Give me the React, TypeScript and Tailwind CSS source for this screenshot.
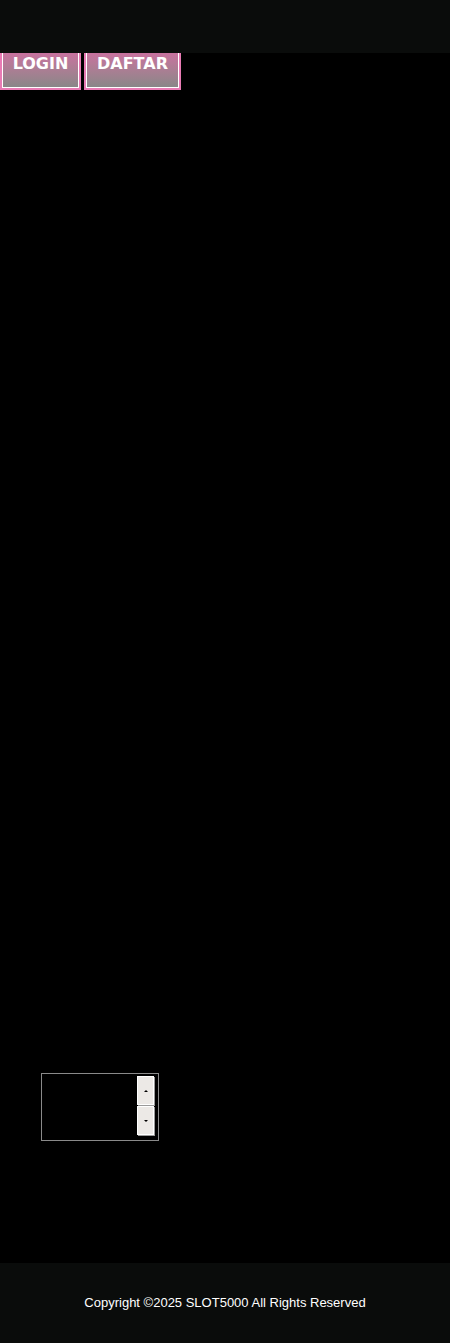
import React from 'react';

export default function App() {
  return (
    <div className="min-h-[1343px] bg-black flex flex-col font-['DejaVu_Sans',sans-serif]">
      {/* top bar */}
      <div className="h-[53px] bg-[#0a0c0b]" />

      {/* auth buttons */}
      <div className="flex gap-[3px] h-[37px]">
        <button className="w-[81px] h-full border-x-2 border-b-2 border-[#e87bb4] shadow-[inset_-1px_-1px_0_#ffffff,inset_1px_0_0_#ffffff] bg-gradient-to-b from-[#c8729f] to-[#878787] text-white font-bold text-[16px] leading-none pb-[14px]">
          LOGIN
        </button>
        <button className="w-[97px] h-full border-x-2 border-b-2 border-[#e87bb4] shadow-[inset_-1px_-1px_0_#ffffff,inset_1px_0_0_#ffffff] bg-gradient-to-b from-[#c8729f] to-[#878787] text-white font-bold text-[16px] leading-none pb-[14px]">
          DAFTAR
        </button>
      </div>

      {/* empty content */}
      <div className="flex-1 pt-[983px] pl-[41px]">
        <div className="w-[118px] h-[68px] border border-[#8a8a8a] bg-black flex justify-end pr-[4px] pt-[2px]">
          <div className="flex flex-col gap-px w-[17px]">
            <div className="h-[29px] bg-[#ece9e6] border border-[#ffffff] shadow-[1px_1px_0_#9a9a9a] flex items-center justify-center">
              <span className="block w-0 h-0 border-x-[2px] border-x-transparent border-b-[2px] border-b-black" />
            </div>
            <div className="h-[29px] bg-[#ece9e6] border border-[#ffffff] shadow-[1px_1px_0_#9a9a9a] flex items-center justify-center">
              <span className="block w-0 h-0 border-x-[2px] border-x-transparent border-t-[2px] border-t-black" />
            </div>
          </div>
        </div>
      </div>

      {/* footer */}
      <div className="h-[80px] bg-[#0a0c0b] flex items-center justify-center">
        <p className="text-white text-[13px] font-['Liberation_Sans',Arial,sans-serif]">
          Copyright ©2025 SLOT5000 All Rights Reserved
        </p>
      </div>
    </div>
  );
}
